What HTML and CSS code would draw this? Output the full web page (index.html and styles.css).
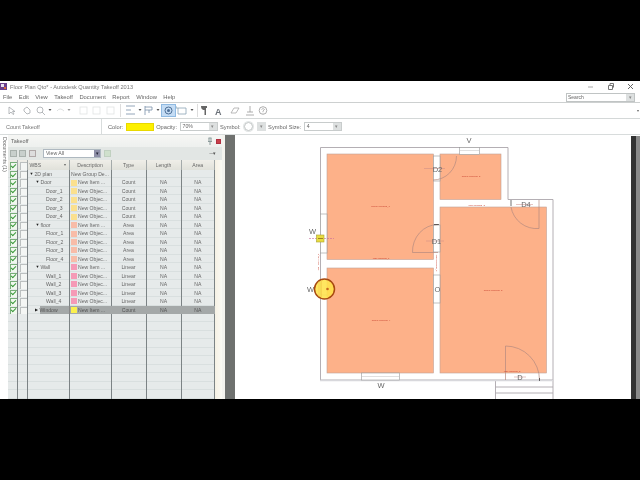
FILE: index.html
```html
<!DOCTYPE html>
<html lang="en">
<head>
<meta charset="utf-8">
<title>Floor Plan Qto</title>
<link rel="stylesheet" href="styles.css">
</head>
<body>
<div class="app">
  <div class="titlebar">
    <svg class="appicon" viewBox="0 0 7 7"><rect width="7" height="7" fill="#6a3f8c"/><rect x="1" y="1" width="3" height="3" fill="#e8e0f0"/><rect x="4" y="4" width="2" height="2" fill="#d8683a"/></svg>
    <span class="apptitle">Floor Plan Qto* - Autodesk Quantity Takeoff 2013</span>
    <div class="winctl">
      <svg viewBox="0 0 7 7"><path d="M1 4h5" stroke="#aaa"/></svg>
      <svg viewBox="0 0 7 7"><path d="M1.5 2.5h4v4h-4zM3 2.500v-2h3.500v4" fill="none" stroke="#777"/></svg>
      <svg viewBox="0 0 7 7"><path d="M1 1l5 5M6 1l-5 5" stroke="#666"/></svg>
    </div>
  </div>
  <div class="menubar">
    <nav class="menu"><span>File</span><span>Edit</span><span>View</span><span>Takeoff</span><span>Document</span><span>Report</span><span>Window</span><span>Help</span></nav>
    <div class="search"><span class="searchtext">Search</span><span class="btn">&#9662;</span></div>
  </div>
  <div class="toolbar">
    <svg class="tools" viewBox="0 0 280 15">
      <g fill="none" stroke="#a4a8ac" stroke-width=".8">
        <path d="M9 4l0 7 2-2 2 2.500 1-.5-1.500-2.500h2.500z"/>
        <path d="M24 6l3-2 3 3v3l-3 1-3-3z"/>
        <circle cx="40" cy="7" r="3"/><path d="M42 9l3 3"/>
        <path d="M57 8q3-4 7 0" stroke="#d4d8d8"/>
        <g stroke="#e0e3e3"><rect x="80" y="4" width="7" height="7"/><rect x="93" y="4" width="7" height="7"/><rect x="107" y="4" width="7" height="7"/></g>
        <path d="M120.500 1v13" stroke="#d4d4d4"/>
        <path d="M126 3h9M126 7h5M126 11h9" stroke="#7890a8"/>
        <path d="M145 3v9M145 4h7v3h-7M149 7v3" stroke="#7890a8"/>
        <path d="M178 5h8v6h-8zM176 3v2h2" stroke="#8ca3b5"/>
        <path d="M197.500 1v13" stroke="#d4d4d4"/>
        <circle cx="263" cy="7.500" r="3.800" stroke="#999"/>
        <path d="M261.500 6.500q1.500-2 3 0l-1.500 1.500v1M263 9.800v.5" stroke="#999" stroke-width=".7"/>
        <path d="M231 10l3-5h5l-3 5z" stroke="#aaa"/>
        <path d="M246 12h8M250 3v6M247 9h6" stroke="#999"/>
      </g>
      <g fill="#555">
        <path d="M48.500 6h3l-1.500 2z"/><path d="M67.500 6h3l-1.500 2z" fill="#999"/><path d="M138.500 6h3l-1.500 2z"/><path d="M156.500 6h3l-1.500 2z"/><path d="M190.500 6h3l-1.500 2z"/>
        <path d="M201 3h6v2h-1v7h-1.500v-5h-1q-2.500-.5-2.500-4z" fill="#666"/>
      </g>
      <rect x="161.500" y="1.500" width="14" height="12" fill="#c4dcf4" stroke="#8fbae2"/>
      <circle cx="168.500" cy="7.500" r="3.500" fill="none" stroke="#4d6f96"/><circle cx="168.500" cy="7.500" r="1.500" fill="#4d6f96"/>
      <text class="tool-a" x="215" y="12">A</text>
    </svg>
    <span class="more">&#9662;</span>
  </div>
  <div class="props">
    <span class="propname">Count Takeoff</span>
    <span class="propsep"></span>
    <span class="lbl">Color:</span>
    <span class="colorbox"></span>
    <span class="lbl">Opacity:</span>
    <span class="field w38"><span class="val">70%</span><span class="btn">&#9662;</span></span>
    <span class="lbl">Symbol:</span>
    <span class="symbol"></span>
    <span class="btn solo">&#9662;</span>
    <span class="lbl">Symbol Size:</span>
    <span class="field w38"><span class="val">4</span><span class="btn">&#9662;</span></span>
  </div>
  <div class="main">
    <div class="doctab">Documents (1)</div>
    <section class="panel">
      <header class="ptitle">
        <span>Takeoff</span>
        <svg class="pin" viewBox="0 0 6 8"><path d="M1.500 1h3M2 1v3.500M4 1v3.500M1 4.500h4M3 4.500V8" fill="none" stroke="#8a9a9a"/></svg>
        <span class="close"></span>
      </header>
      <div class="ptools">
        <span class="sq"></span><span class="sq"></span><span class="sq x"></span>
        <span class="viewsel"><span class="val">View All</span><span class="btn dark">&#9662;</span></span>
        <span class="sq green"></span>
        <span class="ptoolend">&#8722;&#8722;&#9662;</span>
      </div>
      <div class="tablewrap">
        <div class="table">
          <div class="row head">
            <span class="cell chk on"></span><span class="cell chk"></span>
            <span class="cell hwbs">WBS<i>&#9662;</i></span><span class="cell">Description</span><span class="cell">Type</span><span class="cell">Length</span><span class="cell">Area</span>
          </div>
          <div class="tbody">
            <div class="row"><span class="cell chk on"></span><span class="cell chk"></span><span class="cell wbs l0"><b>&#9660;</b><em>2D plan</em></span><span class="cell desc">New Group De...</span><span class="cell"></span><span class="cell"></span><span class="cell"></span></div>
            <div class="row"><span class="cell chk on"></span><span class="cell chk"></span><span class="cell wbs l1"><b>&#9660;</b><em>Door</em></span><span class="cell desc"><i class="sw door"></i>New Item ...</span><span class="cell">Count</span><span class="cell">NA</span><span class="cell">NA</span></div>
            <div class="row"><span class="cell chk on"></span><span class="cell chk"></span><span class="cell wbs l2"><em>Door_1</em></span><span class="cell desc"><i class="sw door"></i>New Objec...</span><span class="cell">Count</span><span class="cell">NA</span><span class="cell">NA</span></div>
            <div class="row"><span class="cell chk on"></span><span class="cell chk"></span><span class="cell wbs l2"><em>Door_2</em></span><span class="cell desc"><i class="sw door"></i>New Objec...</span><span class="cell">Count</span><span class="cell">NA</span><span class="cell">NA</span></div>
            <div class="row"><span class="cell chk on"></span><span class="cell chk"></span><span class="cell wbs l2"><em>Door_3</em></span><span class="cell desc"><i class="sw door"></i>New Objec...</span><span class="cell">Count</span><span class="cell">NA</span><span class="cell">NA</span></div>
            <div class="row"><span class="cell chk on"></span><span class="cell chk"></span><span class="cell wbs l2"><em>Door_4</em></span><span class="cell desc"><i class="sw door"></i>New Objec...</span><span class="cell">Count</span><span class="cell">NA</span><span class="cell">NA</span></div>
            <div class="row"><span class="cell chk on"></span><span class="cell chk"></span><span class="cell wbs l1"><b>&#9660;</b><em>floor</em></span><span class="cell desc"><i class="sw floor"></i>New Item ...</span><span class="cell">Area</span><span class="cell">NA</span><span class="cell">NA</span></div>
            <div class="row"><span class="cell chk on"></span><span class="cell chk"></span><span class="cell wbs l2"><em>Floor_1</em></span><span class="cell desc"><i class="sw floor"></i>New Objec...</span><span class="cell">Area</span><span class="cell">NA</span><span class="cell">NA</span></div>
            <div class="row"><span class="cell chk on"></span><span class="cell chk"></span><span class="cell wbs l2"><em>Floor_2</em></span><span class="cell desc"><i class="sw floor"></i>New Objec...</span><span class="cell">Area</span><span class="cell">NA</span><span class="cell">NA</span></div>
            <div class="row"><span class="cell chk on"></span><span class="cell chk"></span><span class="cell wbs l2"><em>Floor_3</em></span><span class="cell desc"><i class="sw floor"></i>New Objec...</span><span class="cell">Area</span><span class="cell">NA</span><span class="cell">NA</span></div>
            <div class="row"><span class="cell chk on"></span><span class="cell chk"></span><span class="cell wbs l2"><em>Floor_4</em></span><span class="cell desc"><i class="sw floor"></i>New Objec...</span><span class="cell">Area</span><span class="cell">NA</span><span class="cell">NA</span></div>
            <div class="row"><span class="cell chk on"></span><span class="cell chk"></span><span class="cell wbs l1"><b>&#9660;</b><em>Wall</em></span><span class="cell desc"><i class="sw wall"></i>New Item ...</span><span class="cell">Linear</span><span class="cell">NA</span><span class="cell">NA</span></div>
            <div class="row"><span class="cell chk on"></span><span class="cell chk"></span><span class="cell wbs l2"><em>Wall_1</em></span><span class="cell desc"><i class="sw wall"></i>New Objec...</span><span class="cell">Linear</span><span class="cell">NA</span><span class="cell">NA</span></div>
            <div class="row"><span class="cell chk on"></span><span class="cell chk"></span><span class="cell wbs l2"><em>Wall_2</em></span><span class="cell desc"><i class="sw wall"></i>New Objec...</span><span class="cell">Linear</span><span class="cell">NA</span><span class="cell">NA</span></div>
            <div class="row"><span class="cell chk on"></span><span class="cell chk"></span><span class="cell wbs l2"><em>Wall_3</em></span><span class="cell desc"><i class="sw wall"></i>New Objec...</span><span class="cell">Linear</span><span class="cell">NA</span><span class="cell">NA</span></div>
            <div class="row"><span class="cell chk on"></span><span class="cell chk"></span><span class="cell wbs l2"><em>Wall_4</em></span><span class="cell desc"><i class="sw wall"></i>New Objec...</span><span class="cell">Linear</span><span class="cell">NA</span><span class="cell">NA</span></div>
            <div class="row sel"><span class="cell chk on"></span><span class="cell chk"></span><span class="cell wbs l1x"><b>&#9654;</b><em>Window</em></span><span class="cell desc"><i class="sw win"></i>New Item ...</span><span class="cell">Count</span><span class="cell">NA</span><span class="cell">NA</span></div>
            <div class="row filler"><span class="cell"></span><span class="cell"></span><span class="cell"></span><span class="cell"></span><span class="cell"></span><span class="cell"></span><span class="cell"></span></div>
          </div>
        </div>
        <div class="pside"></div>
      </div>
    </section>
    <div class="gutter"></div>
    <div class="strip"></div>
    <div class="canvas">
      <svg class="plan" viewBox="235 135 396 264">
        <g fill="#fdb189" stroke="#c0a298" stroke-width=".6">
          <rect x="327" y="154" width="106.500" height="105.500"/>
          <rect x="440" y="154" width="61" height="45.500"/>
          <rect x="440" y="207" width="106.500" height="166"/>
          <rect x="327" y="268" width="106.500" height="105"/>
        </g>
        <path d="M320.500 380V147.500H508V199.500H553V380H320.500M495.500 380V399M553 380V399M495.500 387H553M495.500 393H553" fill="none" stroke="#aca6ac" stroke-width=".9"/>
        <path d="M320 380.500H553" stroke="#d8d8dc" stroke-width="1.500"/>
        <g fill="#fff" stroke="#989898" stroke-width=".6">
          <rect x="320.500" y="214" width="6.500" height="39"/>
          <rect x="361.500" y="373" width="38" height="7"/>
          <rect x="459.500" y="147.500" width="20" height="7"/>
          <rect x="433.500" y="275" width="6.500" height="28"/>
          <rect x="433.500" y="156" width="6.500" height="25"/>
          <rect x="433.500" y="225" width="6.500" height="27"/>
        </g>
        <path d="M320.500 283v12h6.500" fill="none" stroke="#989898" stroke-width=".6"/>
        <path d="M459.500 150.500h20M361.500 376.500h38" stroke="#c0c0c0" stroke-width=".5"/>
        <g fill="none" stroke="#b38a80" stroke-width=".7">
          <path d="M456.500 156A23.500 24 0 0 1 433 180"/>
          <path d="M412.500 252.500A25.500 27 0 0 1 438 224.500"/>
          <path d="M412.500 252.500H438"/>
          <path d="M511 207A26 26 0 0 0 539 228.500V200"/>
          <path d="M505.500 380V346A34 34 0 0 1 539.500 380"/>
        </g>
        <path d="M434 224.500H439M511 200V206M539.500 378V381" stroke="#333" stroke-width=".7"/>
        <g stroke="#c88a84" stroke-width=".5">
          <path d="M424 168.500H445M426 241H444M516 204.500H533M514 377H526"/>
        </g>
        <path d="M309 238.500H334" stroke="#c86a9a" stroke-width=".6" stroke-dasharray="2 1"/>
        <g class="labels">
          <text x="469" y="143">V</text>
          <text x="437.500" y="171.500">D2</text>
          <text x="436.500" y="244">D1</text>
          <text x="526" y="207">D4</text>
          <text x="437.500" y="292">O</text>
          <text x="520" y="380">D</text>
          <text x="381" y="388">W</text>
          <text x="312.500" y="234">W</text>
          <text x="310.500" y="292">W</text>
        </g>
        <g class="tiny">
          <text x="380.500" y="207">Room Working_1</text>
          <text x="471" y="177">Room Working_2</text>
          <text x="493" y="290.500">Room Working_3</text>
          <text x="381" y="320.500">Room Working_4</text>
          <text x="381" y="259">Wall Working_1</text>
          <text x="476.500" y="206">Wall Working_2</text>
          <text x="512" y="372">Wall Working_3</text>
          <text transform="translate(319 262) rotate(-90)">Wall Working_4</text>
          <text transform="translate(436 263) rotate(90)">Wall Working_5</text>
        </g>
        <rect x="316.500" y="235" width="7.500" height="7" fill="#e8dc40" stroke="#a8a030" stroke-width=".6"/>
        <path d="M318 238.500h5" stroke="#8a6a20" stroke-width=".8"/>
        <circle cx="324.500" cy="289" r="10" fill="#ffe24a" fill-opacity=".88" stroke="#a84a10" stroke-width="1.500"/>
        <path d="M319 281v16M321.500 280v18" stroke="#f4c84a" stroke-width=".6"/>
        <circle cx="327.500" cy="289" r="1.300" fill="#c86a20"/>
      </svg>
    </div>
    <div class="vscroll"></div>
    <div class="vedge"></div>
  </div>
</div>
</body>
</html>
```
FILE: styles.css
```css
* { box-sizing: border-box; }
html, body { margin: 0; height: 480px; overflow: hidden; background: #000; }
body { font-family: "Liberation Sans", Arial, sans-serif; font-size: 5.700px; color: #666; }
.app { margin-top: 81px; height: 318px; width: 640px; background: #fff; display: flex; flex-direction: column; filter: blur(.45px); }

.titlebar { height: 11px; display: flex; align-items: center; gap: 3px; }
.appicon { width: 7px; height: 7px; }
.apptitle { font-size: 5.650px; color: #777; }
.winctl { margin-left: auto; display: flex; gap: 13px; padding-right: 6px; }
.winctl svg { width: 7px; height: 7px; }

.menubar { height: 11px; display: flex; align-items: center; border-bottom: 1px solid #cdd0d0; padding-left: 3px; }
.menu { display: flex; gap: 6.500px; font-size: 5.800px; color: #666; }
.search { margin-left: auto; margin-right: 5px; width: 69px; height: 9px; display: flex; border: 1px solid #c0c4c4; line-height: 7px; }
.searchtext { flex: 1; padding-left: 1px; font-size: 5px; }
.btn { width: 8px; background: #dde0e0; color: #888; font-size: 5px; line-height: 7px; text-align: center; flex: none; }

.toolbar { height: 16px; display: flex; border-bottom: 1px solid #d4d8d8; align-items: center; }
.tools { width: 280px; height: 15px; flex: none; }
.tool-a { font: bold 9px "Liberation Sans", Arial, sans-serif; fill: #6a7078; }
.more { margin-left: auto; padding-right: 1px; font-size: 4px; }

.props { height: 16px; display: flex; align-items: center; border-bottom: 1px solid #d8dcdc; padding-left: 6px; gap: 2.500px; }
.propname { width: 92px; color: #777; font-size: 5.500px; }
.propsep { width: 1px; height: 15px; background: #d8dcdc; margin-right: 4px; }
.colorbox { width: 28px; height: 8px; background: #fdf000; border: 1px solid #e8d800; }
.field { height: 9px; width: 38px; display: flex; border: 1px solid #c8cccc; line-height: 7px; }
.val { flex: 1; padding-left: 2px; font-size: 5.200px; }
.symbol { width: 9px; height: 9px; margin-left: 1px; border: 1px solid #c0c4c4; border-radius: 50%; box-shadow: 0 0 0 1px #e2e5e5; }
.solo { height: 9px; width: 9px; line-height: 9px; margin-left: 1px; }

.main { flex: 1; display: flex; min-height: 0; }
.doctab { width: 8px; writing-mode: vertical-rl; font-size: 5.300px; line-height: 7px; padding-top: 2px; color: #666; flex: none; }
.panel { width: 214px; flex: none; display: flex; flex-direction: column; background: #f4f5f2; }
.ptitle { height: 12px; display: flex; align-items: center; padding: 0 1px 0 3px; background: linear-gradient(#f6f6f4, #eef0ee); font-size: 5.500px; }
.pin { width: 6px; height: 8px; margin-left: auto; margin-right: 3px; }
.close { width: 5px; height: 5px; background: #c8404a; border: 1px solid #b03040; }
.ptools { height: 13px; display: flex; align-items: center; gap: 2px; padding-left: 2px; background: #e2e6e4; }
.sq { width: 7px; height: 7px; background: #c8cfcc; border: 1px solid #a8b0ac; }
.sq.x { background: #ddd; border-color: #b0a8a8; margin-left: 1px; }
.sq.green { background: #cfe0cc; margin-left: 1px; border-color: #c0d0c0; }
.viewsel { width: 58px; height: 9px; margin-left: 5px; display: flex; background: #fff; border: 1px solid #aeb8c0; line-height: 7px; }
.dark { width: 6px; background: #8f90a8; color: #223; }
.ptoolend { margin-left: auto; padding-right: 6px; font-size: 4.500px; color: #555; letter-spacing: -.5px; }

.tablewrap { flex: 1; display: flex; min-height: 0; }
.table { width: 207px; flex: none; display: flex; flex-direction: column; font-size: 5.100px; }
.pside { flex: 1; background: linear-gradient(90deg, #f6f1e4, #fbfaf4); }
.row { display: grid; grid-template-columns: 10px 9.500px 42px 42px 35px 35px 33.500px; height: 8.470px; line-height: 8.470px; }
.cell { border-right: 1px solid #7c8385; text-align: center; overflow: hidden; white-space: nowrap; }
.head { height: 10px; line-height: 10px; background: linear-gradient(#efeee8, #e0e1da); }
.head .cell { border-right-color: #a4aaaa; }
.hwbs { text-align: left; padding-left: 2px; position: relative; }
.hwbs i { position: absolute; right: 3px; top: 0; font-style: normal; font-size: 4px; }
.tbody { flex: 1; display: flex; flex-direction: column; min-height: 0; background: repeating-linear-gradient(#e6eaea 0, #e6eaea 7.470px, #d9dfdf 7.470px, #d9dfdf 8.470px); }
.filler { flex: 1; }
.chk { position: relative; }
.chk::before { content: ""; position: absolute; left: 1.500px; top: 1px; width: 6.500px; height: 6.500px; background: #f4f6f4; border: 1px solid #bcc0c0; }
.chk.on::before { border-color: #78ae78; background: #f0f8ee; }
.chk.on::after { content: ""; position: absolute; left: 3px; top: 2.500px; width: 4px; height: 2px; border-left: 1px solid #3c9a3c; border-bottom: 1px solid #3c9a3c; transform: rotate(-45deg); }
.head .chk::before { top: 2px; }
.head .chk.on::after { top: 3.500px; }
.wbs { display: flex; text-align: left; }
.wbs b { font-weight: normal; font-size: 4px; color: #222; flex: none; width: 5px; }
.wbs em { font-style: normal; flex: 1; }
.l0 { padding-left: 2px; }
.l1 { padding-left: 8px; }
.l1x { padding-left: 7px; }
.l2 { padding-left: 18.500px; }
.desc { text-align: left; padding-left: 1.500px; display: flex; align-items: center; }
.sw { width: 6px; height: 6px; margin-right: 1px; flex: none; }
.door { background: #fbe08e; }
.floor { background: #f8bca8; }
.wall { background: #f59ab6; }
.win { background: #fbf04e; }
.sel { color: #555; }
.sel .cell:nth-child(n+4), .sel .wbs em { background: #a4a8a8; border-right-color: #a4a8a8; }
.sel .wbs { border-right-color: #888; }
.sel .win { outline: 1px solid #a4a8a8; }

.gutter { width: 3px; flex: none; background: #f4f3ee; }
.strip { width: 10px; flex: none; background: #6f716f; }
.canvas { flex: 1; min-width: 0; background: #fff; }
.plan { display: block; width: 396px; height: 264px; }
.labels text { font-size: 7.500px; fill: #666; text-anchor: middle; }
.tiny text { font-size: 2.400px; fill: #c43a2a; text-anchor: middle; }
.vscroll { width: 5px; flex: none; margin-top: 1px; background: #333; }
.vedge { width: 4px; flex: none; margin-top: 1px; background: #8a8a8a; }
```
